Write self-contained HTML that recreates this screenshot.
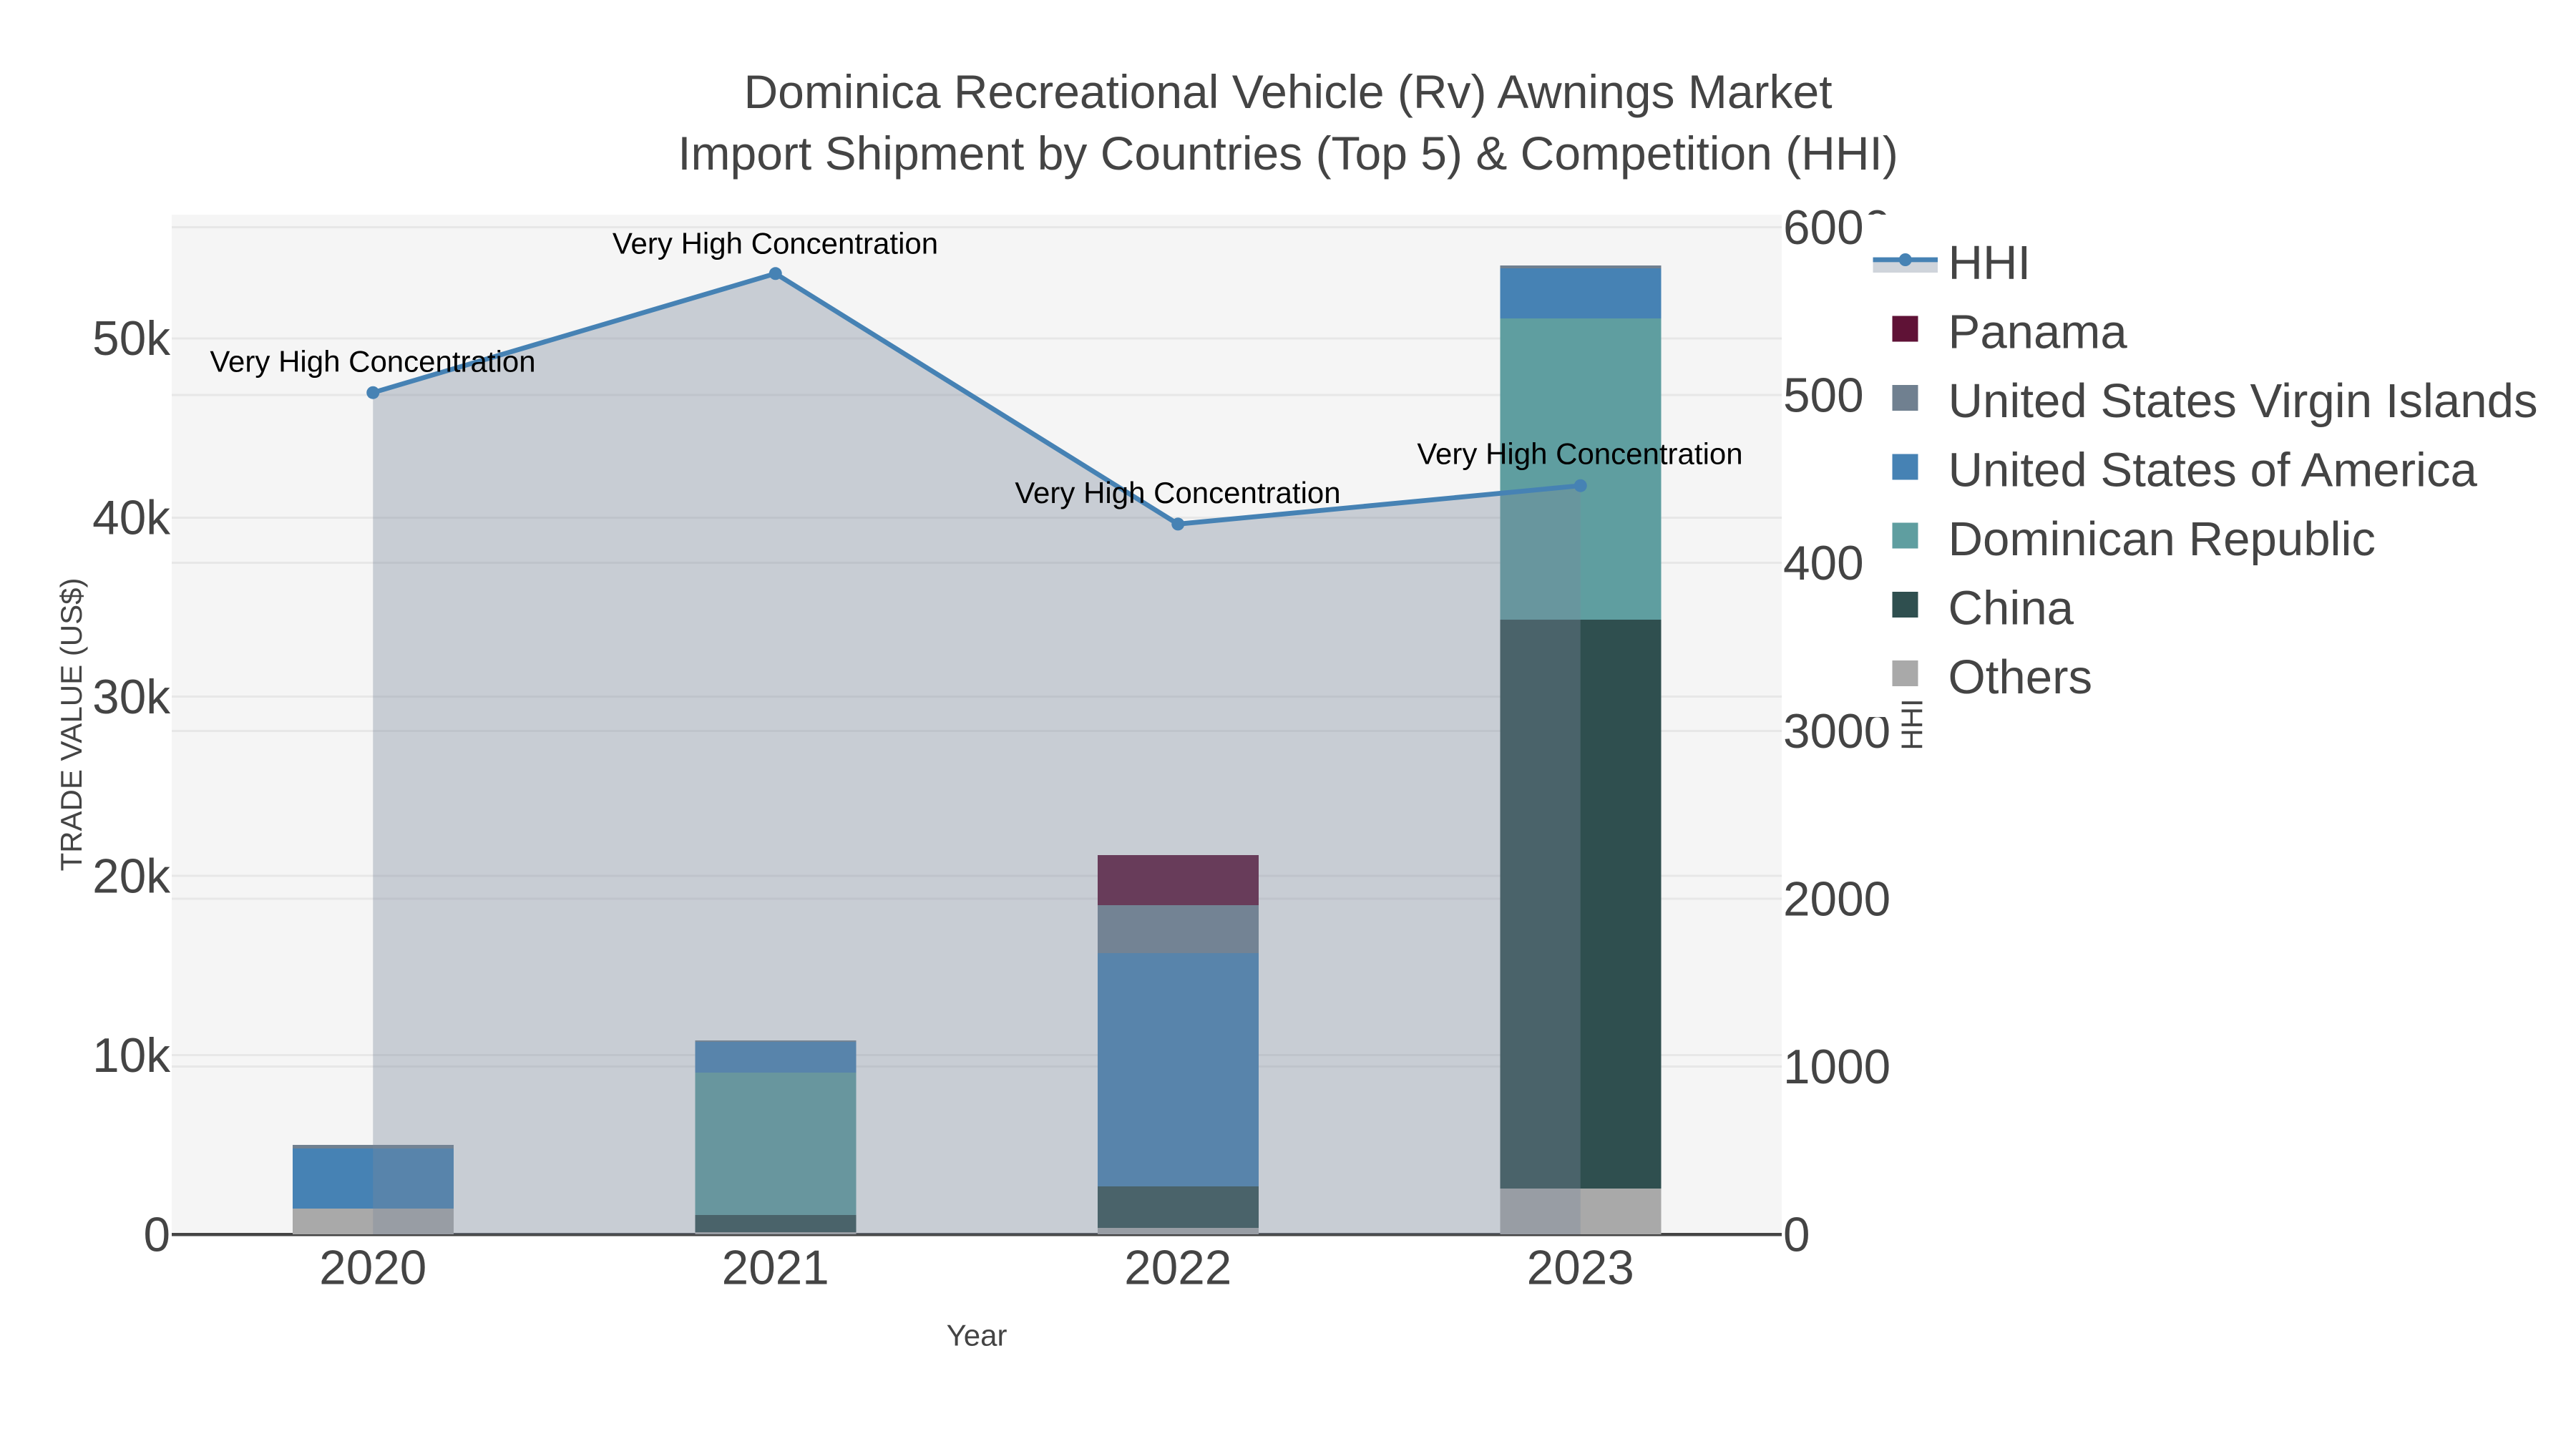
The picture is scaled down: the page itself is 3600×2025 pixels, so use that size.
<!DOCTYPE html>
<html lang="en">
<head>
<meta charset="utf-8">
<title>Dominica Recreational Vehicle (Rv) Awnings Market</title>
<style>
html,body{margin:0;padding:0;background:#fff;width:3600px;height:2025px;overflow:hidden}
svg{display:block}
text{font-family:"Liberation Sans",Arial,sans-serif;fill:#444}
.tick{font-size:67.5px}
.axt{font-size:42px}
.ann{font-size:42px;fill:#000;text-anchor:middle}
.leg{font-size:67.2px}
</style>
</head>
<body>
<svg width="3600" height="2025" viewBox="0 0 3600 2025" xmlns="http://www.w3.org/2000/svg">
<rect width="3600" height="2025" fill="#fff"/>
<rect x="240" y="300" width="2250" height="1425" fill="#f5f5f5"/>

<!-- gridlines -->
<g fill="#e7e7e7" shape-rendering="crispEdges">
<rect x="240" y="1473" width="2250" height="3"/>
<rect x="240" y="1222.5" width="2250" height="3"/>
<rect x="240" y="972" width="2250" height="3"/>
<rect x="240" y="722" width="2250" height="3"/>
<rect x="240" y="471.5" width="2250" height="3"/>
<rect x="240" y="1489" width="2250" height="3"/>
<rect x="240" y="1254.5" width="2250" height="3"/>
<rect x="240" y="1020" width="2250" height="3"/>
<rect x="240" y="785" width="2250" height="3"/>
<rect x="240" y="550.5" width="2250" height="3"/>
<rect x="240" y="316" width="2250" height="3"/>
</g>
<rect x="240" y="1722.75" width="2250" height="4.5" fill="#444" shape-rendering="crispEdges"/>

<!-- bars -->
<g shape-rendering="crispEdges">
<!-- 2020 -->
<rect x="408.75" y="1689" width="225" height="36" fill="#a9a9a9"/>
<rect x="408.75" y="1605" width="225" height="84" fill="#4682b4"/>
<rect x="408.75" y="1600" width="225" height="5" fill="#708090"/>
<!-- 2021 -->
<rect x="971.25" y="1722" width="225" height="3" fill="#a9a9a9"/>
<rect x="971.25" y="1698" width="225" height="24" fill="#2f4f4f"/>
<rect x="971.25" y="1499" width="225" height="199" fill="#5f9ea0"/>
<rect x="971.25" y="1456" width="225" height="43" fill="#4682b4"/>
<rect x="971.25" y="1454" width="225" height="2" fill="#708090"/>
<!-- 2022 -->
<rect x="1533.75" y="1716" width="225" height="9" fill="#a9a9a9"/>
<rect x="1533.75" y="1658" width="225" height="58" fill="#2f4f4f"/>
<rect x="1533.75" y="1332" width="225" height="326" fill="#4682b4"/>
<rect x="1533.75" y="1265" width="225" height="67" fill="#708090"/>
<rect x="1533.75" y="1195" width="225" height="70" fill="#5f1236"/>
<!-- 2023 -->
<rect x="2096.25" y="1661" width="225" height="64" fill="#a9a9a9"/>
<rect x="2096.25" y="866" width="225" height="795" fill="#2f4f4f"/>
<rect x="2096.25" y="445" width="225" height="421" fill="#5f9ea0"/>
<rect x="2096.25" y="375" width="225" height="70" fill="#4682b4"/>
<rect x="2096.25" y="371" width="225" height="4" fill="#708090"/>
</g>

<!-- HHI area + line -->
<polygon points="521.25,548.7 1083.75,382.3 1646.25,732.4 2208.75,678.7 2208.75,1725 521.25,1725" fill="#7a889a" fill-opacity="0.36"/>
<polyline points="521.25,548.7 1083.75,382.3 1646.25,732.4 2208.75,678.7" fill="none" stroke="#4682b4" stroke-width="6.75"/>
<g fill="#4682b4">
<circle cx="521.25" cy="548.7" r="9"/>
<circle cx="1083.75" cy="382.3" r="9"/>
<circle cx="1646.25" cy="732.4" r="9"/>
<circle cx="2208.75" cy="678.7" r="9"/>
</g>

<!-- annotations -->
<text class="ann" x="521" y="519.5">Very High Concentration</text>
<text class="ann" x="1083.5" y="354.5">Very High Concentration</text>
<text class="ann" x="1646" y="703">Very High Concentration</text>
<text class="ann" x="2208" y="648.5">Very High Concentration</text>

<!-- title -->
<text x="1800" y="151" font-size="66" text-anchor="middle">Dominica Recreational Vehicle (Rv) Awnings Market</text>
<text x="1800" y="237" font-size="66" text-anchor="middle">Import Shipment by Countries (Top 5) &amp; Competition (HHI)</text>

<!-- left ticks -->
<g class="tick" text-anchor="end">
<text x="238" y="1748.6">0</text>
<text x="238" y="1498">10k</text>
<text x="238" y="1247.6">20k</text>
<text x="238" y="997.1">30k</text>
<text x="238" y="746.6">40k</text>
<text x="238" y="496.1">50k</text>
</g>

<!-- x ticks -->
<g class="tick" text-anchor="middle">
<text x="521.25" y="1794.6">2020</text>
<text x="1083.75" y="1794.6">2021</text>
<text x="1646.25" y="1794.6">2022</text>
<text x="2208.75" y="1794.6">2023</text>
</g>

<!-- right ticks -->
<g class="tick">
<text x="2492" y="1748.6">0</text>
<text x="2492" y="1514">1000</text>
<text x="2492" y="1279.4">2000</text>
<text x="2492" y="1044.8">3000</text>
<text x="2492" y="810.2">4000</text>
<text x="2492" y="575.6">5000</text>
<text x="2492" y="341">6000</text>
</g>

<!-- axis titles -->
<text class="axt" x="1365" y="1880.7" text-anchor="middle">Year</text>
<text class="axt" transform="translate(114 1012.5) rotate(-90)" text-anchor="middle">TRADE VALUE (US$)</text>

<!-- legend -->
<rect x="2603" y="300" width="997" height="702" fill="#fff"/>
<text class="axt" transform="translate(2686.5 1012.5) rotate(-90)" text-anchor="middle">HHI</text>

<rect x="2617.5" y="363" width="90.5" height="18" fill="#7a889a" fill-opacity="0.36"/>
<rect x="2617.5" y="359.6" width="90.5" height="6.75" fill="#4682b4"/>
<circle cx="2662.75" cy="363" r="9" fill="#4682b4"/>
<g shape-rendering="crispEdges">
<rect x="2644.5" y="441.5" width="36" height="36" fill="#5f1236"/>
<rect x="2644.5" y="538" width="36" height="36" fill="#708090"/>
<rect x="2644.5" y="634.5" width="36" height="36" fill="#4682b4"/>
<rect x="2644.5" y="730.5" width="36" height="36" fill="#5f9ea0"/>
<rect x="2644.5" y="827" width="36" height="36" fill="#2f4f4f"/>
<rect x="2644.5" y="923" width="36" height="36" fill="#a9a9a9"/>
</g>
<g class="leg">
<text x="2722.5" y="390">HHI</text>
<text x="2722.5" y="486.5">Panama</text>
<text x="2722.5" y="583">United States Virgin Islands</text>
<text x="2722.5" y="679.5">United States of America</text>
<text x="2722.5" y="776">Dominican Republic</text>
<text x="2722.5" y="872.5">China</text>
<text x="2722.5" y="969">Others</text>
</g>
</svg>
</body>
</html>
